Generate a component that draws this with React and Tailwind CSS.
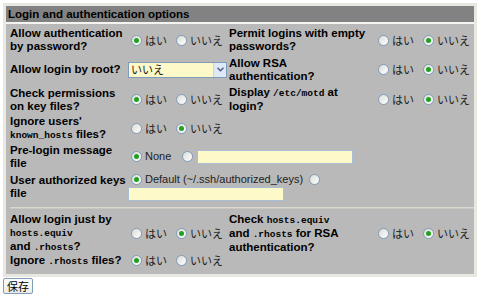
import React from "react";

const lab = "font-['Liberation_Sans',sans-serif] font-bold text-[11.5px] leading-[13px] text-black whitespace-nowrap";
const mono = "font-['Liberation_Mono',monospace] font-bold text-[9.5px]";
const jp = "font-['Noto_Sans_CJK_JP',sans-serif] text-[11px] leading-[13px] text-[#222] whitespace-nowrap";

function Radio({ on }) {
  return (
    <span className="inline-flex w-[11px] h-[11px] rounded-full border border-[#7f9db9] bg-gradient-to-br from-[#dcdcd6] to-white items-center justify-center shrink-0">
      {on && <span className="w-[5px] h-[5px] rounded-full bg-[#21a121]" />}
    </span>
  );
}

function YesNo({ yes }) {
  return (
    <div className="flex items-center whitespace-nowrap">
      <Radio on={yes} />
      <span className={jp + " ml-[3px]"}>はい</span>
      <span className="w-[9px] shrink-0" />
      <Radio on={!yes} />
      <span className={jp + " ml-[3px]"}>いいえ</span>
    </div>
  );
}

function Row({ h, children }) {
  return <div className={"flex items-center " + h}>{children}</div>;
}

export default function App() {
  return (
    <div className="bg-white w-[480px] h-[300px] pt-[3px] pl-[3px]">
      <div className="w-[474px] bg-[#e8e8e0] p-[3px]">
        <div className="h-[16px] bg-[#828282] flex items-center pl-[2px]">
          <span className={lab}>Login and authentication options</span>
        </div>
        <div className="h-[2px] bg-[#f4f4f0]" />
        <div className="bg-[#b9b9b9] pl-[4px] pt-[2px] pb-[6px]">
          <Row h="h-[28px]">
            <div className={lab + " w-[120px]"}>Allow authentication<br />by password?</div>
            <div className="w-[99px] pl-[1px]"><YesNo yes /></div>
            <div className={lab + " w-[149px]"}>Permit logins with empty<br />passwords?</div>
            <div><YesNo yes={false} /></div>
          </Row>
          <Row h="h-[31px]">
            <div className={lab + " w-[120px]"}>Allow login by root?</div>
            <div className="w-[99px]">
              <div className="-ml-[2px] w-[99px] h-[16px] border border-[#7f9db9] bg-[#fdf9c8] flex items-center">
                <span className={jp + " flex-1 pl-[2px] text-[10px]"}>いいえ</span>
                <span className="w-[13px] h-[14px] bg-[#dfe8f7] border-l border-[#c3d3fd] flex items-center justify-center">
                  <svg width="7" height="5" viewBox="0 0 7 5"><path d="M0.5 0.8 L3.5 3.8 L6.5 0.8" fill="none" stroke="#4d6185" strokeWidth="1.5" /></svg>
                </span>
              </div>
            </div>
            <div className={lab + " w-[149px]"}>Allow RSA<br />authentication?</div>
            <div><YesNo yes={false} /></div>
          </Row>
          <Row h="h-[29px]">
            <div className={lab + " w-[120px]"}>Check permissions<br />on key files?</div>
            <div className="w-[99px] pl-[1px]"><YesNo yes /></div>
            <div className={lab + " w-[149px]"}>Display <span className={mono}>/etc/motd</span> at<br />login?</div>
            <div><YesNo yes={false} /></div>
          </Row>
          <Row h="h-[28px]">
            <div className={lab + " w-[120px]"}>Ignore users'<br /><span className={mono}>known_hosts</span> files?</div>
            <div className="pl-[1px]"><YesNo yes={false} /></div>
          </Row>
          <Row h="h-[29px]">
            <div className={lab + " w-[120px]"}>Pre-login message<br />file</div>
            <div className="pl-[1px] flex items-center">
              <Radio on />
              <span className="font-['Liberation_Sans',sans-serif] text-[11px] text-[#222] ml-[3px]">None</span>
              <span className="w-[11px]" />
              <Radio />
              <div className="ml-[4px] w-[156px] h-[14px] border border-[#a9bfd6] bg-[#fdf9c8]" />
            </div>
          </Row>
          <Row h="h-[31px]">
            <div className={lab + " w-[120px]"}>User authorized keys<br />file</div>
            <div className="flex flex-col -ml-[2px]">
              <div className="flex items-center h-[14px] pl-[3px]">
                <Radio on />
                <span className="font-['Liberation_Sans',sans-serif] text-[11px] text-[#222] ml-[3px] whitespace-nowrap">Default (~/.ssh/authorized_keys)</span>
                <span className="w-[6px]" />
                <Radio />
              </div>
              <div className="w-[156px] h-[14px] border border-[#a9bfd6] bg-[#fdf9c8]" />
            </div>
          </Row>
          <div className="h-[12px] flex items-center">
            <div className="h-[2px] w-[464px] bg-[#d9d9d0] border-b border-[#c8c8c0]" />
          </div>
          <Row h="h-[39px]">
            <div className={lab + " w-[120px]"}>Allow login just by<br /><span className={mono}>hosts.equiv</span><br />and <span className={mono}>.rhosts</span>?</div>
            <div className="w-[99px] pl-[1px]"><YesNo yes={false} /></div>
            <div className={lab + " w-[149px]"}>Check <span className={mono}>hosts.equiv</span><br />and <span className={mono}>.rhosts</span> for RSA<br />authentication?</div>
            <div><YesNo yes={false} /></div>
          </Row>
          <Row h="h-[15px]">
            <div className={lab + " w-[120px]"}>Ignore <span className={mono}>.rhosts</span> files?</div>
            <div className="pl-[1px]"><YesNo yes /></div>
          </Row>
        </div>
      </div>
      <button className="mt-[1px] h-[16px] px-[3px] border border-[#7f9db9] rounded-[2px] bg-gradient-to-b from-white to-[#ecebe6] flex items-center">
        <span className="font-['Noto_Sans_CJK_JP',sans-serif] text-[11px] leading-[13px] text-black">保存</span>
      </button>
    </div>
  );
}
